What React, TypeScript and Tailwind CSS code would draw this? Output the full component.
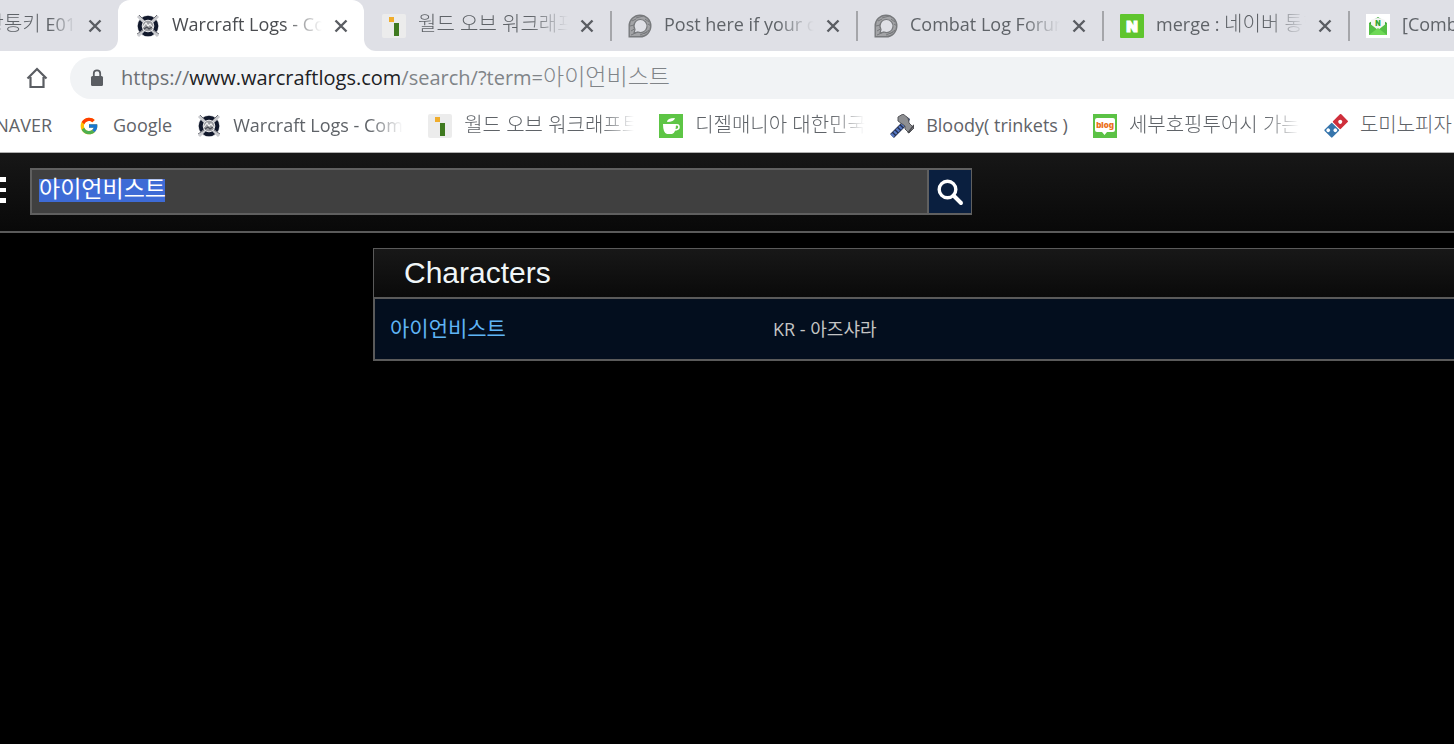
import type { ReactNode } from 'react';
import { FcGoogle } from 'react-icons/fc';

const WarcraftLogsIcon = () => (
  <svg viewBox="0 0 24 24" className="size-6 shrink-0" aria-hidden="true">
    <circle cx="12" cy="12" r="10.8" fill="#d4d5d9" />
    <circle cx="12" cy="12" r="8" fill="none" stroke="#11182b" strokeWidth="4.6" />
    <path d="M2 2l6 6M22 2l-6 6M2 22l6-6M22 22l-6-6" stroke="#c9cace" strokeWidth="3" />
    <path d="M3 1l5 5M21 1l-5 5M1 20l6-4M23 20l-6-4" stroke="#6d6f76" strokeWidth="1" />
    <circle cx="12" cy="12" r="5.8" fill="#9b9ca1" stroke="#e4e4e6" strokeWidth="1" />
    <path d="M7 13l3-4 2 3 2-2 3 4" fill="none" stroke="#f4f4f4" strokeWidth="1.2" />
    <path d="M8 15l3-2 2 2 3-2" fill="none" stroke="#4b4d55" strokeWidth="1.2" />
  </svg>
);

const InvenIcon = () => (
  <svg viewBox="0 0 24 24" className="size-6 shrink-0" aria-hidden="true">
    <rect width="24" height="24" rx="2" fill="#ececec" />
    <rect x="7" y="3" width="5" height="5" fill="#f0ad2c" />
    <rect x="12" y="9" width="5" height="13" fill="#3f7a20" />
  </svg>
);

const ForumIcon = () => (
  <svg viewBox="0 0 24 24" className="size-6 shrink-0" aria-hidden="true">
    <path
      d="M12 1.2A10.8 10.8 0 1 1 12 22.8H1.200V12A10.8 10.800 0 0 1 12 1.200z"
      fill="#a3a4a7"
      stroke="#77797c"
      strokeWidth="1.400"
    />
    <path d="M3 17l5-3M3 21l7-3M12 21l7-3M16 20l5-4M2 12l4-1M4 7l4-2M8 4l7-2M17 5l4 3M20 10l3 2" stroke="#77797c" strokeWidth="1" />
    <path
      d="M12.5 5.5a6.500 6.500 0 1 1-2.500 12.500L6 19l1-3.500A6.500 6.500 0 0 1 12.500 5.500z"
      fill="#dfe0e6"
      stroke="#77797c"
      strokeWidth="1.200"
    />
  </svg>
);

const NaverIcon = () => (
  <svg viewBox="0 0 24 24" className="size-6 shrink-0" aria-hidden="true">
    <rect width="24" height="24" rx="1" fill="#5fc52e" />
    <text x="12" y="17.5" textAnchor="middle" fontSize="15" fontWeight="900" fill="#fff" stroke="#fff" strokeWidth="1" fontFamily="Inter, sans-serif">
      N
    </text>
  </svg>
);

const MailIcon = () => (
  <svg viewBox="0 0 24 24" className="size-6 shrink-0" aria-hidden="true">
    <rect width="24" height="24" fill="#fff" />
    <path d="M3 9l9-6 9 6v12H3z" fill="#3fa63a" />
    <path d="M5 6q7-4 14 0v6l-7 5-7-5z" fill="#f4f6f4" />
    <path d="M3 9l9 7 9-7v12H3z" fill="#54bf45" />
    <path d="M3 21l9-7 9 7z" fill="#6fd957" />
    <text x="12" y="12" textAnchor="middle" fontSize="7" fontWeight="900" fill="#32a532" fontFamily="Inter, sans-serif">
      N
    </text>
  </svg>
);

const CupIcon = () => (
  <svg viewBox="0 0 24 24" className="size-6 shrink-0" aria-hidden="true">
    <rect width="24" height="24" fill="#5dc545" />
    <path d="M4 10h13q0 9-4 10H8q-4-1-4-10z" fill="#fff" />
    <path d="M16 11q4-1 4 2t-5 3" fill="none" stroke="#fff" strokeWidth="1.6" />
    <path d="M8 8q0-4 8-4-1 4-8 4z" fill="#fff" />
  </svg>
);

const HammerIcon = () => (
  <svg viewBox="0 0 24 24" className="size-6 shrink-0" aria-hidden="true">
    <path d="M2 22L15 9" stroke="#263250" strokeWidth="5.5" />
    <path d="M2 22L15 9" stroke="#5577c4" strokeWidth="4" strokeDasharray="2.2 1.4" />
    <path d="M16 2l4 3-1 3z" fill="#34436e" />
    <path d="M8 3l5-3 5 4 1 5 5 5-5 5-4-4v-3L8 7z" fill="#8e8f92" stroke="#55565a" strokeWidth="1" />
    <path d="M24 11l-6 8" stroke="#4a4b50" strokeWidth="1.6" />
  </svg>
);

const BlogIcon = () => (
  <svg viewBox="0 0 24 24" className="size-6 shrink-0" aria-hidden="true">
    <rect width="24" height="24" fill="#5bc245" />
    <path d="M4 4h16q2 0 2 2v10q0 2-2 2h-6l-2.5 3L9 18H4q-2 0-2-2V6q0-2 2-2z" fill="#fff" />
    <text x="12" y="14" textAnchor="middle" fontSize="8" fontWeight="900" fill="#ec7220" fontFamily="Inter, sans-serif">
      blog
    </text>
  </svg>
);

const DominoIcon = () => (
  <svg viewBox="0 0 24 24" className="size-6 shrink-0" aria-hidden="true">
    <g transform="rotate(45 12 12)">
      <rect x="6.5" y="0" width="11" height="11.5" rx="1" fill="#cf2f3b" />
      <rect x="6.5" y="12.5" width="11" height="11" rx="1" fill="#3675ac" />
      <circle cx="12" cy="6" r="2" fill="#fff" />
      <circle cx="9.500" cy="20.500" r="1.900" fill="#fff" />
      <circle cx="14.500" cy="15.500" r="1.900" fill="#fff" />
    </g>
  </svg>
);

const CloseIcon = () => (
  <svg viewBox="0 0 16 16" className="size-4" aria-hidden="true">
    <path d="M2.5 2.5l11 11M13.5 2.5l-11 11" stroke="#5a5d62" strokeWidth="2.4" />
  </svg>
);

const Ko = ({ children }: { children: ReactNode }) => <span className="text-[20px] font-light">{children}</span>;

const tabs = [
  { id: 'logs', icon: <WarcraftLogsIcon />, title: 'Warcraft Logs - Combat', active: true },
  { id: 'inven', icon: <InvenIcon />, title: <Ko>월드 오브 워크래프트</Ko> },
  { id: 'post', icon: <ForumIcon />, title: 'Post here if your combat', divider: true },
  { id: 'forum', icon: <ForumIcon />, title: 'Combat Log Forums', divider: true },
  { id: 'merge', icon: <NaverIcon />, title: <>merge : <Ko>네이버 통합</Ko></>, divider: true },
  { id: 'mail', icon: <MailIcon />, title: '[Combat Log]', divider: true },
];

const bookmarks = [
  { id: 'google', icon: <FcGoogle className="size-6 shrink-0 p-0.5" />, title: 'Google' },
  { id: 'logs', icon: <WarcraftLogsIcon />, title: 'Warcraft Logs - Combat', fade: true },
  { id: 'inven', icon: <InvenIcon />, title: <Ko>월드 오브 워크래프트</Ko>, fade: true },
  { id: 'diesel', icon: <CupIcon />, title: <Ko>디젤매니아 대한민국</Ko>, fade: true },
  { id: 'bloody', icon: <HammerIcon />, title: 'Bloody( trinkets )' },
  { id: 'blog', icon: <BlogIcon />, title: <Ko>세부호핑투어시 가는</Ko>, fade: true },
  { id: 'domino', icon: <DominoIcon />, title: <Ko>도미노피자</Ko> },
];

const TabStrip = () => (
  <div className="flex h-[51px] overflow-hidden">
    <div className="flex w-[118px] shrink-0 items-center justify-end rounded-br-xl bg-[#dfe0e6] pr-[15px]">
      <div className="flex w-[76px] justify-end overflow-hidden pb-1 whitespace-nowrap [mask-image:linear-gradient(to_right,#000_65%,transparent)]">
        <span><Ko>왕통키</Ko> E01</span>
      </div>
      <button aria-label="Close tab" className="ml-[11px] shrink-0"><CloseIcon /></button>
    </div>
    {tabs.map((tab) => (
      <div
        key={tab.id}
        className={
          tab.active
            ? 'w-[246px] shrink-0 bg-linear-to-b from-[#dfe0e6] from-50% to-white to-50%'
            : 'w-[246px] shrink-0 bg-[#dfe0e6] nth-3:rounded-bl-xl'
        }
      >
        <div className={tab.active ? 'flex h-full items-center rounded-t-xl bg-white text-[#4a4c50]' : 'flex h-full items-center'}>
          <span className={tab.divider ? 'h-[30px] w-0.5 bg-[#a5a6aa]' : 'w-0.5'} />
          <span className="ml-4">{tab.icon}</span>
          <span className="ml-3 w-[150px] overflow-hidden pb-1 whitespace-nowrap [mask-image:linear-gradient(to_right,#000_75%,transparent)]">
            {tab.title}
          </span>
          <button aria-label="Close tab" className="ml-[11px]"><CloseIcon /></button>
        </div>
      </div>
    ))}
  </div>
);

const Toolbar = () => (
  <div className="flex h-[54px] items-center">
    <button aria-label="Home" className="ml-[25px]">
      <svg viewBox="0 0 24 24" className="size-6" aria-hidden="true">
        <path d="M2.500 12.500L12 3l9.500 9.500M5.500 11v10h13V11" fill="none" stroke="#5a5d62" strokeWidth="2.200" />
      </svg>
    </button>
    <div className="ml-[21px] flex h-[42px] flex-1 items-center overflow-hidden rounded-l-full bg-[#f1f3f5]">
      <svg viewBox="0 0 14 18" className="ml-5 h-[18px] w-[14px]" aria-hidden="true">
        <rect x="1" y="7" width="12" height="10" rx="1.5" fill="#5a5d62" />
        <path d="M3.8 8V4.5a3.200 3.200 0 0 1 6.400 0V8" fill="none" stroke="#5a5d62" strokeWidth="1.8" />
      </svg>
      <div role="textbox" aria-label="Address" className="ml-[17px] pb-0.5 text-[20px] whitespace-nowrap text-[#808488]">
        <span className="text-[#6c7074]">https://</span>
        <span className="text-[#202124]">www.warcraftlogs.com</span>
        /search/?term=<span className="text-[23px] font-light">아이언비스트</span>
      </div>
    </div>
  </div>
);

const BookmarksBar = () => (
  <nav className="flex h-12 items-center gap-[25px] overflow-hidden border-b border-[#b0b0b0] pb-1.5">
    <a href="#naver" className="flex w-[52px] shrink-0 justify-end overflow-hidden pb-0.5">NAVER</a>
    {bookmarks.map((item) => (
      <a key={item.id} href={`#${item.id}`} className="flex shrink-0 items-center gap-3">
        {item.icon}
        <span
          className={
            item.fade
              ? 'w-[170px] overflow-hidden pb-0.5 whitespace-nowrap [mask-image:linear-gradient(to_right,#000_80%,transparent)]'
              : 'pb-0.5 whitespace-nowrap'
          }
        >
          {item.title}
        </span>
      </a>
    ))}
  </nav>
);

const SearchHeader = () => (
  <header className="flex items-start border-b-2 border-[#5a5a5a] bg-linear-to-b from-[#171717] to-[#090909] pt-[15px] pb-4">
    <button aria-label="Menu" className="mt-[9px] flex w-1.5 shrink-0 flex-col gap-1.5">
      <span className="h-[5px] w-full bg-white" />
      <span className="h-1 w-full bg-white" />
      <span className="h-[5px] w-full bg-white" />
    </button>
    <form className="ml-6 flex h-[47px] w-[942px] max-w-full" onSubmit={(e) => e.preventDefault()}>
      {/* highlighted term sits in a tighter band than the font's own line box */}
      <input
        aria-label="Search"
        defaultValue="아이언비스트"
        className="min-w-0 flex-1 border-2 border-[#606060] bg-[#404040] bg-[linear-gradient(#3e6bd6,#3e6bd6)] bg-[length:126px_23px] bg-[position:7px_9px] bg-no-repeat px-[7px] pb-1.5 text-[23px] text-white outline-none"
      />
      <button aria-label="Submit search" className="flex w-[43px] items-center justify-center border-y-2 border-r border-[#606060] bg-[#0a1f3f]">
        <svg viewBox="0 0 28 28" className="size-7" aria-hidden="true">
          <circle cx="11.500" cy="11.500" r="8.300" fill="none" stroke="#fff" strokeWidth="3.400" />
          <path d="M17.500 17.500l7.500 7.500" stroke="#fff" strokeWidth="4" strokeLinecap="round" />
        </svg>
      </button>
    </form>
  </header>
);

const Results = () => (
  <main className="mt-[15px] ml-[373px]">
    <h2 className="h-[49px] border-t border-l border-[#5a5a5a] bg-linear-to-b from-[#181818] to-[#0a0a0a] pl-[30px] font-['Liberation_Sans',sans-serif] text-[30px] leading-[48px] font-normal text-[#f0f6f8]">
      Characters
    </h2>
    <table className="w-full table-fixed border-separate border-spacing-0 border-y-2 border-l-2 border-[#5a5a5a] bg-[#030e1e]">
      <tbody>
        <tr className="h-[60px]">
          <td className="w-[383px] pl-[15px] text-[21px]">
            <a href="#character" className="text-[#5fb4f5]">아이언비스트</a>
          </td>
          <td className="pl-[15px] text-[18px] text-[#c4c4c4]">KR - 아즈샤라</td>
        </tr>
      </tbody>
    </table>
  </main>
);

const App = () => (
  <div className="min-h-screen overflow-x-hidden bg-black font-['Open_Sans','Noto_Sans_CJK_KR',sans-serif]">
    <div className="bg-white text-[18px] leading-7 text-[#5f6368]">
      <TabStrip />
      <Toolbar />
      <BookmarksBar />
    </div>
    <SearchHeader />
    <Results />
  </div>
);

export default App;
